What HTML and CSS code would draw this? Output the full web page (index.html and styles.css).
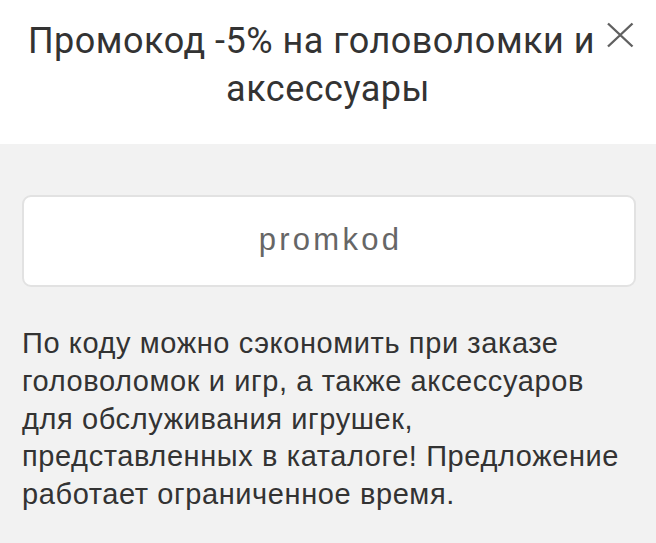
FILE: index.html
```html
<!DOCTYPE html>
<html lang="ru">
<head>
  <meta charset="UTF-8" />
  <meta name="viewport" content="width=device-width, initial-scale=1.0" />
  <title>Промокод</title>
  <link rel="stylesheet" href="styles.css">
</head>
<body>
  <header class="promo-head">
    <button class="close-btn" aria-label="Закрыть">
      <svg width="28" height="26" viewBox="0 0 28 26">
        <path d="M2 1.5 L26.5 24.5 M26.5 1.5 L2 24.5" stroke="#606060" stroke-width="2.4" fill="none" />
      </svg>
    </button>
    <h1 class="promo-title">Промокод -5% на головоломки и аксессуары</h1>
  </header>

  <main class="promo-body">
    <div class="code-box">promkod</div>
    <p class="promo-text">По коду можно сэкономить при заказе головоломок и игр, а также аксессуаров для обслуживания игрушек, представленных в каталоге! Предложение работает ограниченное время.</p>
  </main>
</body>
</html>
```

FILE: styles.css
```css
* {
  box-sizing: border-box;
}

body {
  margin: 0;
  background-color: #f2f2f2;
  font-family: "Liberation Sans", Arial, sans-serif;
  color: #333;
}

.promo-head {
  background-color: #ffffff;
  padding: 17px 22px 31px;
}

.close-btn {
  float: right;
  width: 33px;
  height: 40px;
  margin: 0;
  padding: 5px 0 0;
  border: 0;
  background: none;
  display: flex;
  justify-content: flex-end;
  align-items: flex-start;
  cursor: pointer;
}

.promo-title {
  margin: 0;
  font-family: Roboto, "Noto Sans", sans-serif;
  font-weight: 400;
  font-size: 36px;
  line-height: 48px;
  letter-spacing: 0.5px;
  text-align: center;
  color: #333;
}

.promo-body {
  padding: 51px 20px 20px 22px;
}

.code-box {
  height: 92px;
  background-color: #ffffff;
  border: 2px solid #e2e2e2;
  border-radius: 9px;
  display: flex;
  align-items: center;
  justify-content: center;
  padding: 0 0 2px 3px;
  font-size: 31px;
  letter-spacing: 3.3px;
  color: #666;
}

.promo-text {
  margin: 38px 0 0;
  font-size: 29px;
  line-height: 37.75px;
  letter-spacing: 0.6px;
  color: #333;
}
```
